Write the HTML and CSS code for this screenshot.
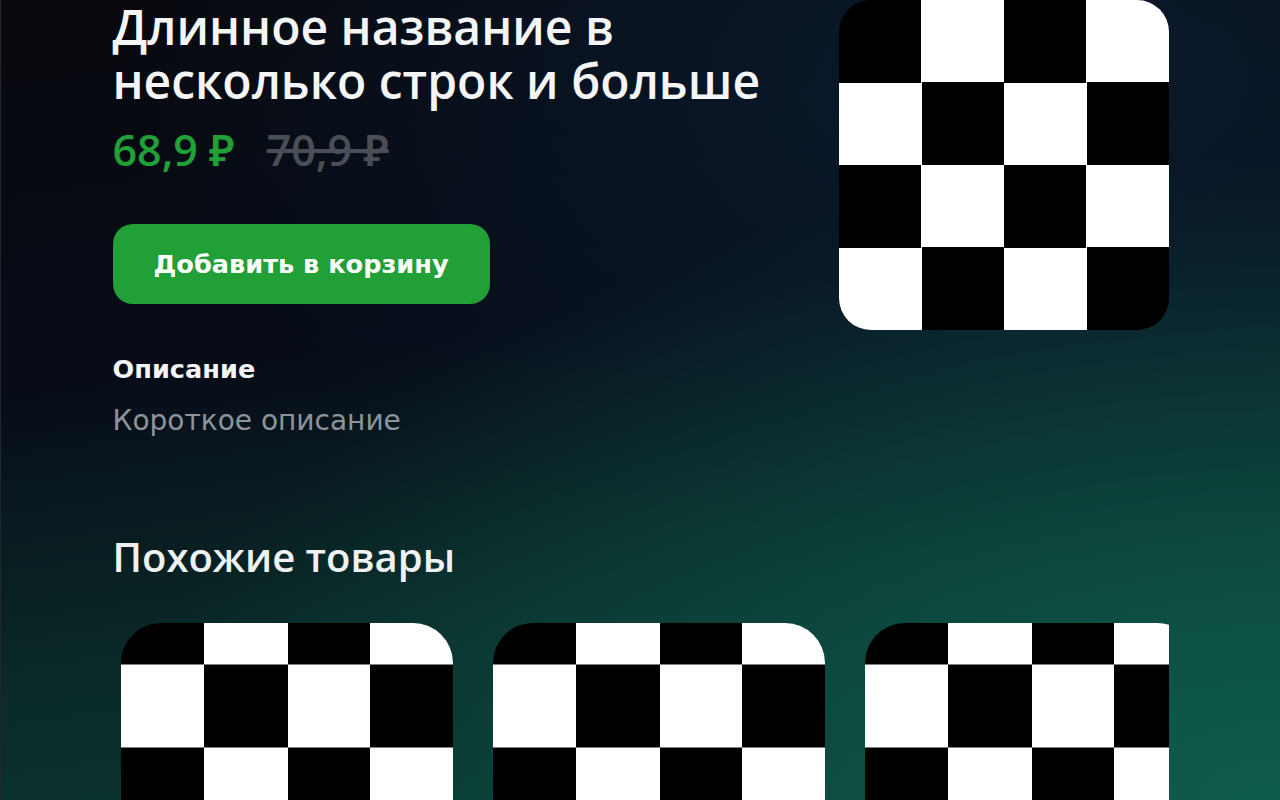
FILE: index.html
```html
<!DOCTYPE html>
<html lang="ru">
<head>
<meta charset="utf-8">
<title>Товар</title>
<link rel="stylesheet" href="styles.css">
</head>
<body>
<div class="page">
  <main class="container">
    <section class="product">
      <div class="info">
        <h1 class="title">Длинное название в несколько строк и больше</h1>
        <div class="prices">
          <span class="price">68,9 ₽</span>
          <span class="old-price">70,9 ₽</span>
        </div>
        <button class="buy">Добавить в корзину</button>
        <h3 class="desc-label">Описание</h3>
        <p class="desc">Короткое описание</p>
      </div>
      <div class="hero checker"></div>
    </section>
    <section class="similar">
      <h2 class="similar-title">Похожие товары</h2>
      <div class="scroller">
        <div class="card"><div class="card-img checker-sm"></div></div>
        <div class="card"><div class="card-img checker-sm"></div></div>
        <div class="card"><div class="card-img checker-sm"></div></div>
      </div>
    </section>
  </main>
</div>
</body>
</html>
```

FILE: styles.css
```css
* { box-sizing: border-box; }
html, body { margin: 0; padding: 0; }
body { background: #090b10; }

.page {
  height: 800px;
  overflow: hidden;
  border-left: 1px solid #23262c;
  background:
    radial-gradient(ellipse 90% 80% at 100% 100%, rgba(14, 94, 78, 0.95) 0%, rgba(14, 94, 78, 0) 100%),
    radial-gradient(ellipse 70% 60% at 80% 10%, rgba(10, 28, 48, 0.9) 0%, rgba(10, 28, 48, 0) 100%),
    linear-gradient(172deg, #08090e 0%, #070c18 40%, #0a2a28 70%, #0a3c31 100%);
}

.container {
  width: 1056px;
  margin: 0 auto;
}

.product {
  display: flex;
  gap: 40px;
  align-items: flex-start;
}

.info { flex: 1; }

.title {
  margin: 0;
  font-family: "Open Sans", "Noto Sans", sans-serif;
  font-weight: 600;
  font-size: 48px;
  line-height: 54px;
  color: #f3f5f6;
}

.prices {
  display: flex;
  gap: 32px;
  margin-top: 18px;
  font-family: "Open Sans", "Noto Sans", sans-serif;
  font-weight: 600;
  font-size: 43px;
  line-height: 48px;
}
.price { color: #21a038; }
.old-price { color: #4a4f57; text-decoration: line-through; }

.buy {
  display: block;
  margin-top: 50px;
  height: 80px;
  padding: 0 41px;
  border: 0;
  border-radius: 20px;
  background: #21a038;
  color: #fff;
  font-family: "DejaVu Sans", sans-serif;
  font-weight: 700;
  font-size: 25.6px;
  cursor: pointer;
}

.desc-label {
  margin: 51px 0 0;
  font-family: "DejaVu Sans", sans-serif;
  font-weight: 700;
  font-size: 25.6px;
  line-height: 28px;
  color: #f3f5f6;
}

.desc {
  margin: 22px 0 0;
  font-family: "DejaVu Sans", sans-serif;
  font-size: 28px;
  line-height: 32px;
  color: #8d949b;
}

.hero {
  width: 330px;
  height: 330px;
  border-radius: 32px;
  flex: none;
}

.checker {
  background: repeating-conic-gradient(#fff 0 25%, #000 0 50%) 0 0 / 165px 165px;
}

.similar { margin-top: 96px; }

.similar-title {
  margin: 0;
  font-family: "Open Sans", "Noto Sans", sans-serif;
  font-weight: 600;
  font-size: 40px;
  line-height: 48px;
  color: #eef2f3;
}

.scroller {
  display: flex;
  gap: 40px;
  margin-top: 42px;
  padding-left: 8px;
  overflow: hidden;
}

.card { flex: none; width: 332px; }

.card-img {
  height: 250px;
  border-radius: 40px;
}

.checker-sm {
  background: repeating-conic-gradient(#fff 0 25%, #000 0 50%) 0 -41.5px / 166px 166px;
}
```
